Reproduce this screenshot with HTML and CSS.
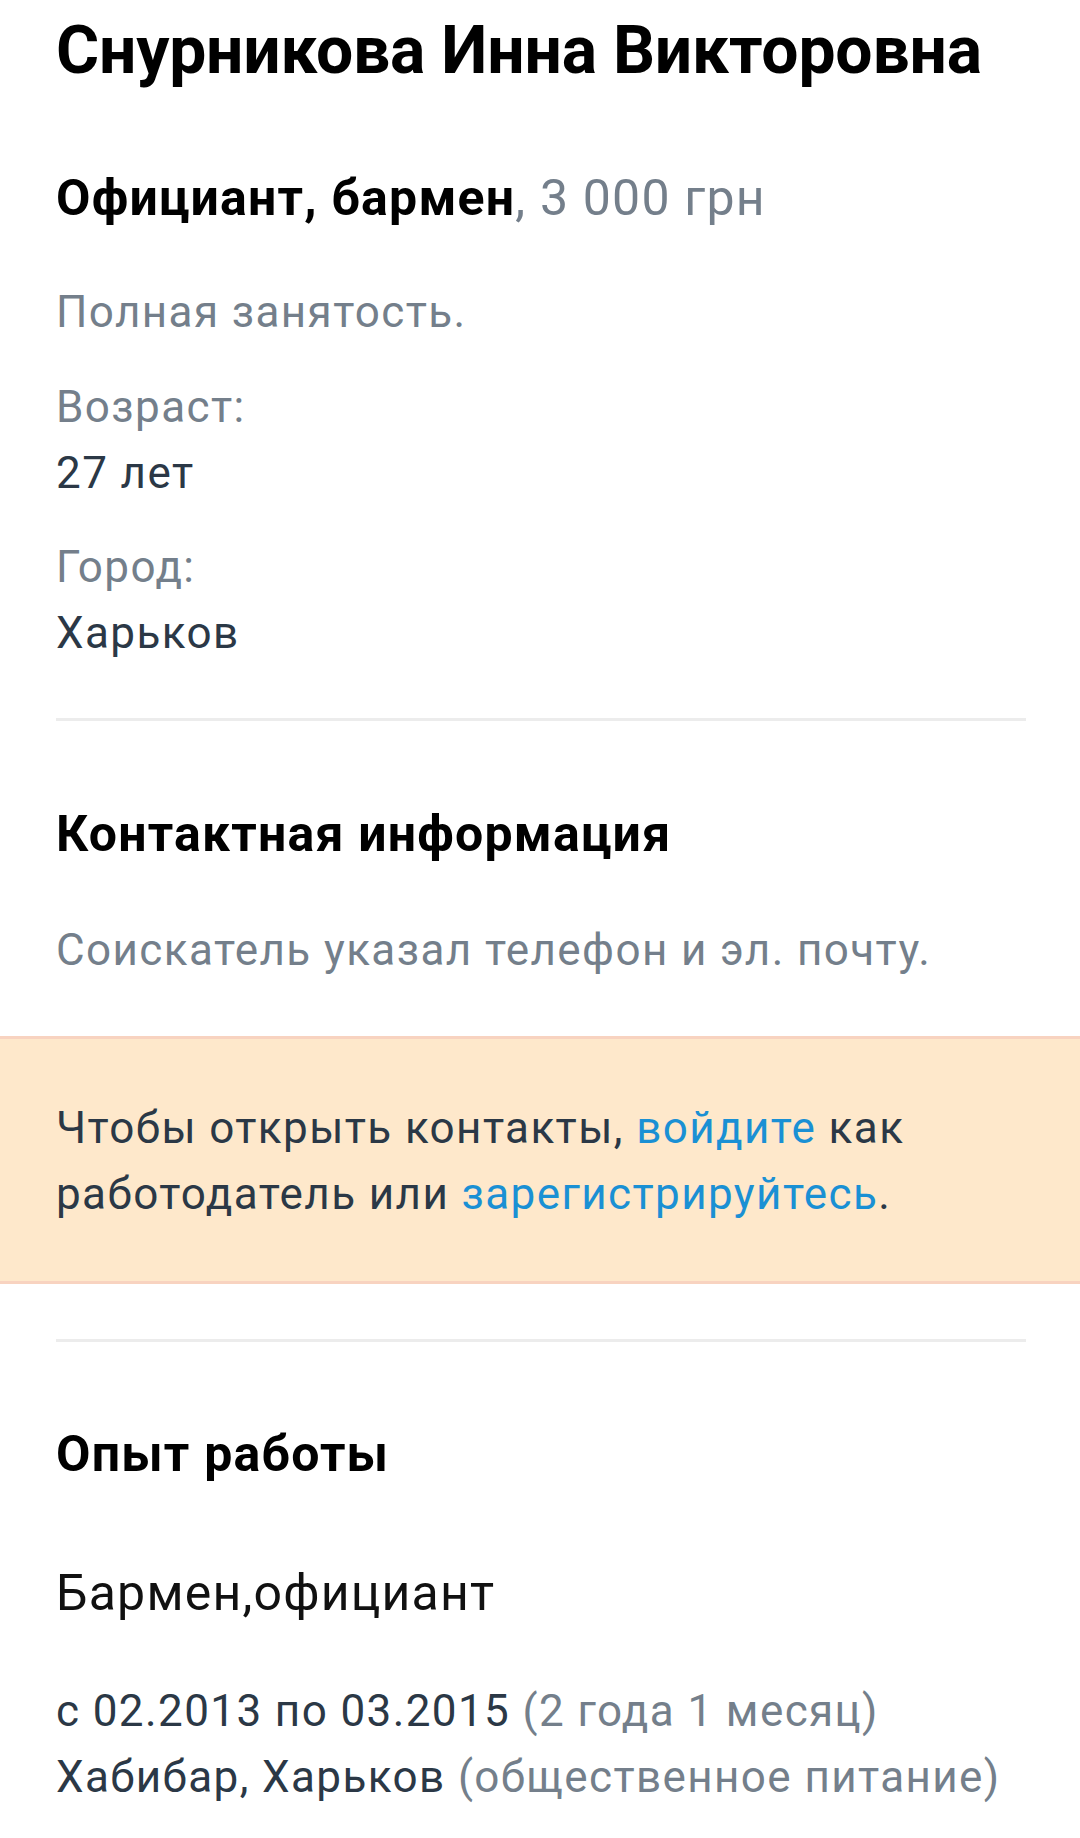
FILE: index.html
```html
<!DOCTYPE html>
<html lang="ru">
<head>
<meta charset="utf-8">
<title>Снурникова Инна Викторовна</title>
<link rel="stylesheet" href="styles.css">
</head>
<body>
<div class="page">
  <section class="section">
    <h1 class="name">Снурникова Инна Викторовна</h1>
    <p class="position"><b>Официант, бармен</b><span class="salary">, 3 000 грн</span></p>
    <p class="muted employment">Полная занятость.</p>
    <dl class="facts">
      <div class="fact">
        <dt class="muted">Возраст:</dt>
        <dd>27 лет</dd>
      </div>
      <div class="fact">
        <dt class="muted">Город:</dt>
        <dd>Харьков</dd>
      </div>
    </dl>
  </section>
  <hr class="divider first">
  <section class="section contacts">
    <h2 class="heading">Контактная информация</h2>
    <p class="muted note">Соискатель указал телефон и эл. почту.</p>
  </section>
</div>
<div class="banner">
  <p>Чтобы открыть контакты, <a href="#">войдите</a> как работодатель или <a href="#">зарегистрируйтесь</a>.</p>
</div>
<div class="page">
  <hr class="divider second">
  <section class="section experience">
    <h2 class="heading">Опыт работы</h2>
    <p class="job">Бармен,официант</p>
    <p class="period">с 02.2013 по 03.2015 <span class="muted">(2 года 1 месяц)</span><br>Хабибар, Харьков <span class="muted">(общественное питание)</span></p>
  </section>
</div>
</body>
</html>
```
FILE: styles.css
```css
* { box-sizing: border-box; }
html, body { margin: 0; padding: 0; background: #fff; }
body {
  font-family: Roboto, "Noto Sans", "Liberation Sans", sans-serif;
  font-size: 44px;
  line-height: 66px;
  letter-spacing: 1.4px;
  color: #2b3846;
}
p, h1, h2, dl, dd, dt { margin: 0; }
.page { padding: 0 54px 0 56px; }
.muted { color: #747f8b; }
.name {
  font-size: 66px;
  line-height: 80px;
  font-weight: 700;
  color: #000;
  padding-top: 11px;
  letter-spacing: -0.2px;
}
.position {
  margin-top: 75px;
  font-size: 50px;
  line-height: 64px;
  letter-spacing: 1.2px;
  color: #000;
}
.position b { font-weight: 700; }
.salary { color: #747f8b; font-weight: 400; }
.employment { margin-top: 49px; }
.facts { display: flex; flex-direction: column; gap: 28px; margin-top: 29px; }
.divider {
  border: 0;
  height: 3px;
  background: #ececec;
  margin: 0;
}
.divider.first { margin-top: 52px; }
.heading {
  font-size: 50px;
  line-height: 64px;
  font-weight: 700;
  letter-spacing: 1.2px;
  color: #000;
}
.contacts .heading { margin-top: 81px; }
.note { margin-top: 51px; }
.banner {
  margin-top: 53px;
  background: #fee8cb;
  border-top: 3px solid #f8d3c0;
  border-bottom: 3px solid #f8d3c0;
  padding: 56px 56px 54px;
  color: #2b3846;
}
.banner a { color: #1a90d4; text-decoration: none; }
.divider.second { margin-top: 55px; }
.experience .heading { margin-top: 80px; }
.job { margin-top: 74px; color: #111; font-size: 50px; letter-spacing: 1.2px; }
.period { margin-top: 52px; }
```
